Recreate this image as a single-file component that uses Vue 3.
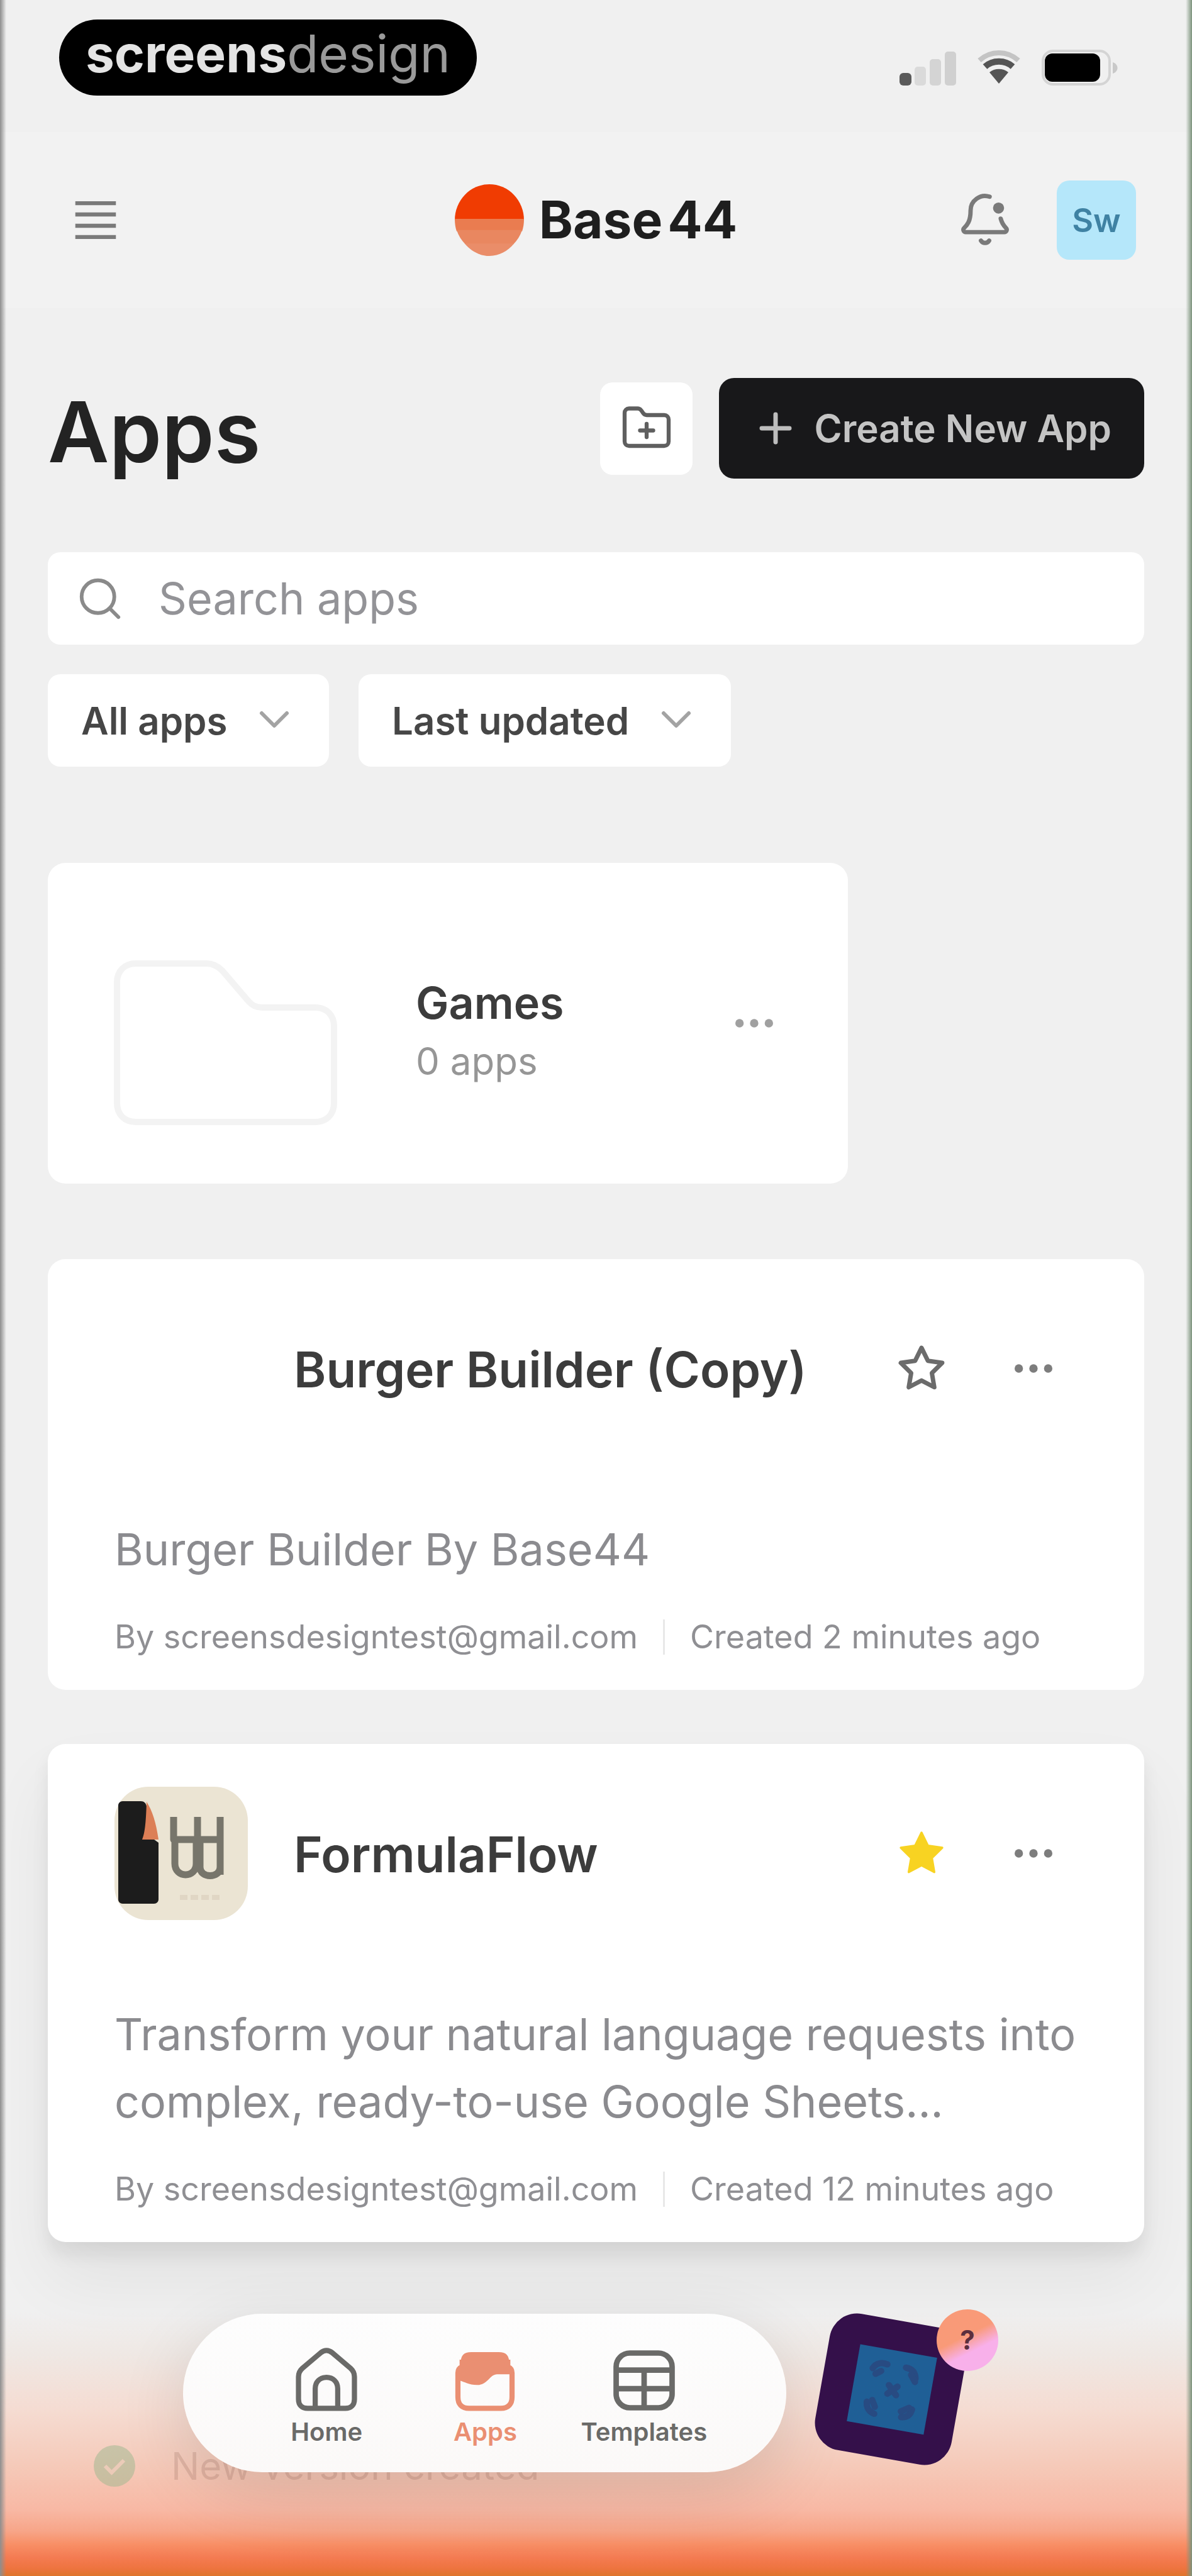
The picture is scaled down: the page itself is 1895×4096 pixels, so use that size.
<template>
  <div class="page">
    <div class="status-bar">
      <div class="pill"><b>screens</b><span>design</span></div>
      <div class="status-icons">
        <svg width="94" height="60" viewBox="0 0 94 60" aria-hidden="true">
          <rect x="4" y="38" width="19" height="20" rx="6" fill="#5a5a5a"/>
          <rect x="28" y="28" width="18" height="30" rx="5" fill="#dadada"/>
          <rect x="52" y="16" width="18" height="42" rx="5" fill="#d4d4d4"/>
          <rect x="76" y="4" width="18" height="54" rx="5" fill="#d0d0d0"/>
        </svg>
        <svg width="72" height="60" viewBox="0 0 72 60" aria-hidden="true">
          <path d="M5 18c18-16 44-16 62 0" fill="none" stroke="#c4c4c4" stroke-width="8"/>
          <path d="M14 28c12-11 32-11 44 0" fill="none" stroke="#555" stroke-width="10"/>
          <path d="M21 37c8-7 22-7 30 0L36 55z" fill="#555"/>
        </svg>
        <svg width="122" height="60" viewBox="0 0 122 60" aria-hidden="true">
          <rect x="2" y="3" width="106" height="53" rx="16" fill="none" stroke="#d4d4d4" stroke-width="4"/>
          <rect x="5" y="7" width="88" height="45" rx="12" fill="#000"/>
          <path d="M113 21c10 3 10 15 0 18z" fill="#c9c9c9"/>
        </svg>
      </div>
    </div>

    <header class="header">
      <button class="icon-btn menu-btn" aria-label="Menu">
        <svg width="126" height="86" viewBox="0 0 35 24" fill="none" stroke="#7a7a7a" stroke-width="1.8" aria-hidden="true">
          <path d="M8.500 4.500h18M8.500 9.500h18M8.500 14.500h18M8.500 19.500h18"/>
        </svg>
      </button>
      <a href="#" class="brand">
        <svg width="110" height="114" viewBox="0 0 112 116" aria-hidden="true">
          <path d="M0 58a56 58 0 0 1 112 0z" fill="#f03c02"/>
          <path d="M0 56h112c0 8-1 14-3 20H3C1 70 0 64 0 56z" fill="#ea7c50"/>
          <path d="M3 74h106c-3 9-8 17-14 23H17C11 91 6 83 3 74z" fill="#e98760"/>
          <path d="M16 96h80c-10 12-24 20-40 20S26 108 16 96z" fill="#ea8d69"/>
        </svg>
        <span class="brand-name"><span>Base</span><span>44</span></span>
      </a>
      <div class="header-right">
        <button class="icon-btn" aria-label="Notifications">
          <svg width="92" height="92" viewBox="0 0 24 24" fill="none" stroke="#7a7a7a" stroke-width="1.8" stroke-linecap="round" stroke-linejoin="round" aria-hidden="true">
            <path d="M13.900 2.300A6 6 0 0 0 6 8c0 4.500-1.400 6-2.700 7.300A1 1 0 0 0 4 17h16a1 1 0 0 0 .7-1.700c-.9-.9-1.700-1.900-2.200-3.900"/>
            <path d="M10.300 20.500a2 2 0 0 0 3.400 0"/>
            <circle cx="17.600" cy="7" r="2.300" fill="#7a7a7a" stroke="none"/>
          </svg>
        </button>
        <button class="avatar">Sw</button>
      </div>
    </header>

    <main class="main">
      <div class="title-row">
        <h1>Apps</h1>
        <div class="title-actions">
          <button class="folder-btn" aria-label="New folder">
            <svg width="84" height="84" viewBox="0 0 24 24" fill="none" stroke="#5f5f5f" stroke-width="1.8" stroke-linecap="round" stroke-linejoin="round" aria-hidden="true">
              <path d="M20 20a2 2 0 0 0 2-2V8a2 2 0 0 0-2-2h-7.900a2 2 0 0 1-1.700-.9l-.8-1.200A2 2 0 0 0 7.900 3H4a2 2 0 0 0-2 2v13a2 2 0 0 0 2 2z"/>
              <path d="M12 10v6M9 13h6"/>
            </svg>
          </button>
          <button class="create-btn">
            <svg width="88" height="88" viewBox="0 0 24 24" fill="none" stroke="#bdbdbd" stroke-width="1.9" stroke-linecap="round" aria-hidden="true"><path d="M6 12h12M12 6v12"/></svg>
            Create New App
          </button>
        </div>
      </div>

      <label class="search">
        <svg width="78" height="78" viewBox="0 0 24 24" fill="none" stroke="#8a8a8a" stroke-width="1.8" stroke-linecap="round" aria-hidden="true"><circle cx="11" cy="11" r="8"/><path d="m21 21-4.300-4.300"/></svg>
        <input v-model="query" type="text" placeholder="Search apps" aria-label="Search apps" />
      </label>

      <div class="filters">
        <div v-for="f in filters" :key="f" class="filter">
          <select :aria-label="f"><option>{{ f }}</option></select>
          <svg width="80" height="80" viewBox="0 0 24 24" fill="none" stroke="#a3a3a3" stroke-width="1.8" stroke-linecap="round" stroke-linejoin="round" aria-hidden="true"><path d="m6 9 6 6 6-6"/></svg>
        </div>
      </div>

      <section class="folder-card">
        <svg class="folder-art" width="356" height="326" viewBox="0 0 356 326" fill="none" stroke="#f3f3f3" stroke-width="10" aria-hidden="true">
          <path d="M36 68h112c10 0 18 4 25 11l42 49c6 7 12 10 22 10h84c18 0 30 12 30 30v122c0 18-12 30-30 30H36c-18 0-30-12-30-30V98c0-18 12-30 30-30z"/>
        </svg>
        <div class="folder-text">
          <h2>Games</h2>
          <p>0 apps</p>
        </div>
        <button class="more-btn" aria-label="More">
          <svg width="80" height="84" viewBox="0 0 24 24" fill="#a0a0a0" aria-hidden="true"><circle cx="5" cy="12" r="2"/><circle cx="12" cy="12" r="2"/><circle cx="19" cy="12" r="2"/></svg>
        </button>
      </section>

      <article v-for="app in apps" :key="app.name" class="app-card" :class="{ raised: app.starred }">
        <div class="app-head">
          <div class="app-icon">
            <svg v-if="app.hasIcon" width="212" height="212" viewBox="0 0 212 212" aria-hidden="true">
              <rect width="212" height="212" rx="54" fill="#ebe4d3"/>
              <path d="M6 30c0-4 3-7 7-7h29c5 0 8 3 9 8l8 50 11 8v90c0 4-3 7-7 7H13c-4 0-7-3-7-7z" fill="#1c1c1c"/>
              <path d="M51 24c9 14 15 32 19 60H44c4-10 6-24 7-60z" fill="#dc7f56"/>
              <path d="M94 48v36h72M132 48v36M168 48v92M96 84v38c0 24 34 24 34 0V86M136 86v42c0 18 32 18 32 0" fill="none" stroke="#77756b" stroke-width="11" stroke-linejoin="round"/>
              <path d="M104 176h64" stroke="#e0d6c4" stroke-width="8" stroke-dasharray="12 5"/>
            </svg>
          </div>
          <h2>{{ app.name }}</h2>
          <button class="card-btn" aria-label="Favorite" @click="app.starred = !app.starred">
            <svg width="84" height="84" viewBox="0 0 24 24" :fill="app.starred ? '#f8d322' : 'none'" :stroke="app.starred ? '#f8d322' : '#6b6b6b'" :stroke-width="app.starred ? 1 : 2" stroke-linejoin="round" aria-hidden="true">
              <path d="M12 2.600l2.900 5.900 6.500.950-4.700 4.600 1.100 6.450L12 17.450 6.200 20.500l1.100-6.450-4.700-4.600 6.500-.950z"/>
            </svg>
          </button>
          <button class="card-btn" aria-label="More">
            <svg width="80" height="84" viewBox="0 0 24 24" fill="#7d7d7d" aria-hidden="true"><circle cx="5" cy="12" r="2"/><circle cx="12" cy="12" r="2"/><circle cx="19" cy="12" r="2"/></svg>
          </button>
        </div>
        <p class="app-desc">{{ app.description }}</p>
        <div class="app-meta">
          <span>By {{ app.owner }}</span>
          <i class="divider"></i>
          <span>Created {{ app.created }}</span>
        </div>
      </article>
    </main>

    <div class="toast">
      <svg width="72" height="72" viewBox="0 0 24 24" aria-hidden="true">
        <circle cx="12" cy="12" r="11" fill="#9db88f"/>
        <path d="m7 12 3.500 3.500L17 9" fill="none" stroke="#e3cdb9" stroke-width="2"/>
      </svg>
      <span>New version created</span>
    </div>

    <div class="dock">
      <nav class="nav">
        <a href="#" class="nav-item">
          <svg width="116" height="116" viewBox="0 0 24 24" fill="none" stroke="currentColor" stroke-width="1.700" stroke-linejoin="round" aria-hidden="true">
            <path d="M2.800 10.800c0-1.200.4-2 1.300-2.800l6-5.100c1.200-1 2.600-1 3.800 0l6 5.100c.9.8 1.300 1.600 1.300 2.800v7.400c0 1.900-1.100 3-3 3H5.800c-1.900 0-3-1.100-3-3z"/>
            <path d="M8.300 21v-6.300c0-2.200 1.500-3.700 3.700-3.700s3.700 1.500 3.700 3.700V21"/>
          </svg>
          <span>Home</span>
        </a>
        <a href="#" class="nav-item active">
          <svg width="116" height="116" viewBox="0 0 24 24" fill="none" stroke="currentColor" stroke-width="1.700" aria-hidden="true">
            <path d="M4.500 6h15v1.500c1 .4 1.400 1 1.400 2v8c0 2.300-1.200 3.700-3.700 3.700H6.800c-2.500 0-3.700-1.400-3.700-3.700v-8c0-1 .4-1.600 1.400-2z"/>
            <path d="M4 6.500C4 3.800 5 2.700 7.500 2.700h9C19 2.700 20 3.800 20 6.500l.8 3.500H16c-2.500 0-3 3.500-6.500 3.500-3 0-4-1-6-1.500z" fill="currentColor" stroke="none"/>
          </svg>
          <span>Apps</span>
        </a>
        <a href="#" class="nav-item">
          <svg width="116" height="116" viewBox="0 0 24 24" fill="none" stroke="currentColor" stroke-width="1.800" aria-hidden="true">
            <rect x="2.800" y="3" width="18.400" height="18" rx="4.500"/>
            <path d="M3 8.600h18M12 8.600V21M3 14.700h18"/>
          </svg>
          <span>Templates</span>
        </a>
      </nav>
      <div class="tile">
        <svg width="284" height="264" viewBox="0 8 284 264" aria-hidden="true">
          <defs>
            <linearGradient id="badge" x1="0.2" y1="0" x2="0.700" y2="1">
              <stop offset="0.450" stop-color="#f99a78"/>
              <stop offset="0.700" stop-color="#f8b0ea"/>
            </linearGradient>
          </defs>
          <g transform="rotate(10 112 134)">
            <rect x="2" y="24" width="220" height="220" rx="44" fill="#34104a"/>
            <rect x="52" y="72" width="124" height="124" fill="#1f5f96"/>
            <g fill="none" stroke="#284b82" stroke-width="10" stroke-linecap="round">
              <path d="M78 106c4-9 12-12 22-10M130 96c10 0 16 5 18 15M78 160c1 10 6 15 15 17M136 175c9-1 14-6 15-15"/>
              <path d="m108 128 14 14M122 128l-14 14M84 114l8-6M140 106l8 10M86 156l6 10M134 166l12-8"/>
            </g>
          </g>
          <circle cx="234" cy="56" r="49" fill="url(#badge)"/>
          <text x="234" y="71" text-anchor="middle" class="badge-text">?</text>
        </svg>
      </div>
    </div>
  </div>
</template>

<script setup>
import { ref } from 'vue'

const query = ref('')
const filters = ['All apps', 'Last updated']

const apps = ref([
  {
    name: 'Burger Builder (Copy)',
    description: 'Burger Builder By Base44',
    owner: 'screensdesigntest@gmail.com',
    created: '2 minutes ago',
    hasIcon: false,
    starred: false
  },
  {
    name: 'FormulaFlow',
    description: 'Transform your natural language requests into complex, ready-to-use Google Sheets...',
    owner: 'screensdesigntest@gmail.com',
    created: '12 minutes ago',
    hasIcon: true,
    starred: true
  }
])
</script>

<style>
body { margin:0; background:#f0f0f0; }
</style>

<style scoped>
* { box-sizing:border-box; }
.page { position:relative; min-height:100vh; background:#f0f0f0; font-family:Inter, "Liberation Sans", sans-serif; color:#333; overflow:hidden; }
.page::before, .page::after { content:""; position:absolute; top:0; bottom:0; width:10px; z-index:5; }
.page::before { left:0; background:linear-gradient(90deg, #8e8e8e, rgba(240,240,240,0)); }
.page::after { right:0; background:linear-gradient(270deg, #7c937c, rgba(240,240,240,0)); }
h1, h2, p { margin:0; }
button { font-family:inherit; border:none; padding:0; cursor:pointer; display:flex; align-items:center; justify-content:center; background:transparent; }
a { text-decoration:none; color:inherit; }
svg { display:block; flex-shrink:0; }

.status-bar { display:flex; justify-content:space-between; align-items:flex-start; height:210px; padding:31px 117px 0 94px; }
.pill { display:flex; align-items:center; justify-content:center; width:664px; height:121px; padding-bottom:12px; border-radius:61px; background:#000; font-size:82px; line-height:100px; }
.pill b { color:#e4e4e4; font-weight:700; }
.pill span { color:#9a9a9a; }
.status-icons { display:flex; gap:32px; padding-top:47px; }

.header { display:grid; grid-template-columns:1fr auto 1fr; align-items:center; height:280px; padding:0 89px; background:#f2f2f2; }
.menu-btn { justify-self:start; }
.brand { display:flex; align-items:center; gap:24px; }
.brand-name { display:flex; gap:8px; font-size:82px; line-height:100px; font-weight:700; color:#1e1e1e; }
.header-right { display:flex; align-items:center; justify-content:flex-end; gap:68px; }
.avatar { width:126px; height:126px; border-radius:20px; background:#b5e7fa; color:#3f82a3; font-size:52px; font-weight:600; }

.main { padding:111px 76px 0; }
.title-row { display:flex; justify-content:space-between; align-items:center; }
h1 { padding-top:10px; font-size:134px; line-height:150px; font-weight:600; color:#232323; }
.title-actions { display:flex; align-items:center; gap:42px; }
.folder-btn { width:147px; height:147px; border-radius:20px; background:#fff; }
.create-btn { height:160px; padding:0 52px 0 46px; gap:17px; border-radius:24px; background:#18181a; color:#c4c4c4; font-size:60px; font-weight:600; }

.search { display:flex; align-items:center; gap:54px; height:147px; margin-top:117px; padding:0 44px; border-radius:20px; background:#fff; }
.search input { flex:1; min-width:0; border:none; outline:none; background:transparent; font-family:inherit; font-size:70px; color:#333; padding:0; }
.search input::placeholder { color:#939397; opacity:1; }
.filters { display:flex; gap:47px; margin-top:47px; }
.filter { position:relative; }
.filter select { appearance:none; height:147px; padding:0 161px 0 53px; border:none; border-radius:20px; background:#fff; font-family:inherit; font-size:60px; font-weight:600; color:#464646; }
.filter svg { position:absolute; right:47px; top:32px; pointer-events:none; }

.folder-card { display:flex; align-items:center; width:73%; height:510px; margin-top:153px; padding:0 109px 0 104px; border-radius:28px; background:#fff; }
.folder-text { flex:1; padding:28px 0 0 125px; }
.folder-text h2 { font-size:70px; line-height:92px; font-weight:600; color:#3c3c3c; }
.folder-text p { font-size:60px; line-height:92px; color:#969696; }

.app-card { margin-top:86px; padding:68px 106px 54px; border-radius:28px; background:#fff; }
.folder-card + .app-card { margin-top:120px; }
.app-card.raised { box-shadow:0 20px 28px rgba(0,0,0,0.07), 0 60px 110px rgba(0,0,0,0.06); }
.app-head { display:flex; align-items:center; height:212px; }
.app-icon { width:212px; margin-right:73px; }
.app-head h2 { flex:1; padding-top:4px; font-size:78px; line-height:96px; font-weight:600; color:#3c3c3c; }
.card-btn { width:140px; height:140px; }
.card-btn + .card-btn { margin-left:38px; }
.app-desc { margin-top:128px; font-size:70px; line-height:107px; color:#8b8b8f; }
.app-meta { display:flex; align-items:center; gap:40px; margin-top:56px; font-size:52px; line-height:60px; color:#8f8f93; white-space:nowrap; }
.divider { width:3px; height:56px; background:#e8e8e8; }

.page > .toast { position:absolute; left:0; right:0; bottom:0; height:420px; padding:209px 76px 0 146px; display:flex; align-items:flex-start; gap:54px; font-size:60px; line-height:72px; color:rgba(110,60,50,0.16);
  background:linear-gradient(180deg, rgba(240,240,240,0) 0%, #efe8e4 16%, #f5dcd2 37%, #f5c9b8 59%, #f8b8a4 75%, #f7a588 83%, #f88f66 88%, #f47b52 93%, #ee7440 97%, #df752c 100%); }
.toast svg { opacity:0.5; }

.dock { position:absolute; left:291px; bottom:159px; display:flex; align-items:center; gap:54px; }
.nav { display:flex; width:959px; height:252px; padding:48px 100px 0 102px; border-radius:126px; background:linear-gradient(180deg, #fdfdfd, #fbf9f8); box-shadow:0 30px 110px rgba(0,0,0,0.12); }
.nav-item { flex:1; display:flex; flex-direction:column; align-items:center; color:#6a6a68; }
.nav-item span { font-size:40px; line-height:48px; font-weight:600; }
.nav-item.active { color:#ea8f72; }
.tile svg { overflow:visible; }
.badge-text { font-size:42px; font-weight:700; fill:#5c2f3e; }
</style>
